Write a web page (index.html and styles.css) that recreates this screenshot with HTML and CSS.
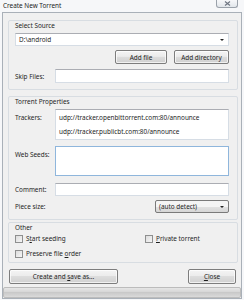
FILE: index.html
```html
<!DOCTYPE html>
<html>
  <head>
    <title>Create New Torrent</title>
    <link rel="stylesheet" href="styles.css">
  </head>
  <body>
    <div class="window">
      <div class="titlebar">
        <span class="title">Create New Torrent</span>
        <span class="close-btn">
          <svg width="7" height="5" viewBox="0 0 7 5"><path d="M1 0.5L6 4.5M6 0.5L1 4.5" stroke="#6d7480" stroke-width="1.1" fill="none"/></svg>
        </span>
      </div>

      <div class="client">
        <!-- Select Source -->
        <div class="group group-source">
          <div class="group-title">Select Source</div>
          <div class="combo combo-edit">
            <span>D:\android</span>
            <span class="arrow"></span>
          </div>
          <div class="btn-row">
            <button class="btn btn-file">Add file</button>
            <button class="btn btn-dir">Add directory</button>
          </div>
          <div class="field-row skip-row">
            <span class="label">Skip Files:</span>
            <div class="input"></div>
          </div>
        </div>

        <!-- Torrent Properties -->
        <div class="group group-props">
          <div class="group-title">Torrent Properties</div>
          <div class="field-row trackers-row">
            <span class="label">Trackers:</span>
            <div class="input textarea">udp://tracker.openbittorrent.com:80/announce

udp://tracker.publicbt.com:80/announce</div>
          </div>
          <div class="field-row seeds-row">
            <span class="label">Web Seeds:</span>
            <div class="input textarea focus"></div>
          </div>
          <div class="field-row comment-row">
            <span class="label">Comment:</span>
            <div class="input"></div>
          </div>
          <div class="field-row piece-row">
            <span class="label">Piece size:</span>
            <div class="combo combo-drop">
              <span>(auto detect)</span>
              <span class="arrow"></span>
            </div>
          </div>
        </div>

        <!-- Other -->
        <div class="group group-other">
          <div class="group-title">Other</div>
          <div class="check-row">
            <label class="check check-wide"><span class="box"></span><span>S<u>t</u>art seeding</span></label>
            <label class="check"><span class="box"></span><span><u>P</u>rivate torrent</span></label>
          </div>
          <div class="check-row">
            <label class="check"><span class="box"></span><span>Preserve file <u>o</u>rder</span></label>
          </div>
        </div>

        <div class="action-row">
          <button class="btn btn-create">Create and <u>s</u>ave as...</button>
          <button class="btn btn-close"><u>C</u>lose</button>
        </div>

        <div class="progress"></div>
      </div>
    </div>
  </body>
</html>
```

FILE: styles.css
```css
body {
  margin: 0;
  background: #f6f7f9;
  font-family: "Noto Sans", "Open Sans", sans-serif;
  font-size: 6.4px;
  color: #1e1e1e;
}

.window {
  width: 244px;
  height: 300px;
  display: flex;
  flex-direction: column;
}

.titlebar {
  height: 13px;
  display: flex;
  align-items: flex-start;
  justify-content: space-between;
  padding-left: 3px;
}

.title {
  line-height: 12px;
  color: #222;
}

.close-btn {
  width: 20px;
  height: 7px;
  margin-right: 6px;
  border: 1px solid #9aa1aa;
  border-top: none;
  border-radius: 0 0 3px 3px;
  background: linear-gradient(#f7f8fa, #e2e6eb);
  display: flex;
  align-items: center;
  justify-content: center;
}

.client {
  flex: 1;
  margin: 0 2px 1px 2px;
  border: 1px solid #a9b0b8;
  background: #f0f0f0;
  padding-top: 7px;
  display: flex;
  flex-direction: column;
}

/* Group boxes */
.group {
  margin: 0 3px 0 5px;
  border: 1px solid #d8dde2;
  border-radius: 2px;
  padding: 0 8px 0 6px;
  display: flex;
  flex-direction: column;
}

.group-title {
  height: 9px;
  line-height: 9px;
}

.group-source {
  height: 68px;
}

.group-props {
  margin-top: 6px;
  height: 122px;
}

.group-other {
  margin-top: 2px;
  height: 39px;
}

/* Inputs and combos */
.input {
  flex: 1;
  background: #fff;
  border: 1px solid #d6dde5;
  border-top-color: #abadb3;
  box-sizing: border-box;
}

.input.focus {
  border-color: #8fb6dc;
}

.textarea {
  white-space: pre;
  line-height: 7px;
  padding: 4px 0 0 3px;
}

.combo {
  display: flex;
  align-items: center;
  justify-content: space-between;
  box-sizing: border-box;
  height: 13px;
  padding: 0 4px 0 3px;
}

.combo-edit {
  margin-top: 3px;
  background: #fff;
  border: 1px solid #d6dde5;
  border-top-color: #abadb3;
}

.combo-drop {
  width: 74px;
  margin-left: auto;
  border: 1px solid #7a7a7a;
  border-radius: 2px;
  background: linear-gradient(#f4f4f4 50%, #e2e2e2 50%, #d6d6d6);
}

.arrow {
  width: 0;
  height: 0;
  border-left: 2px solid transparent;
  border-right: 2px solid transparent;
  border-top: 2px solid #222;
}

/* Buttons */
.btn {
  font-family: inherit;
  font-size: inherit;
  color: #1e1e1e;
  height: 14px;
  padding: 0;
  border: 1px solid #7d7d7d;
  border-radius: 2px;
  background: linear-gradient(#f4f4f4 0%, #ececec 45%, #dddddd 50%, #d0d0d0 100%);
  box-shadow: inset 0 0 0 1px rgba(255, 255, 255, 0.7);
}

.btn-row {
  display: flex;
  justify-content: flex-end;
  gap: 7px;
  margin-top: 4px;
}

.btn-file {
  width: 52px;
}

.btn-dir {
  width: 55px;
}

/* Label + control rows */
.field-row {
  display: flex;
}

.label {
  width: 40px;
  flex-shrink: 0;
}

.skip-row {
  margin-top: 5px;
  height: 14px;
  align-items: center;
}

.skip-row .input {
  height: 14px;
}

.trackers-row {
  margin-top: 3px;
  height: 31px;
}

.trackers-row .label,
.seeds-row .label {
  padding-top: 4px;
}

.seeds-row {
  margin-top: 6px;
  height: 30px;
}

.comment-row {
  margin-top: 7px;
  height: 13px;
  align-items: center;
}

.comment-row .input {
  height: 13px;
}

.piece-row {
  margin-top: 4px;
  align-items: center;
}

/* Checkboxes */
.check-row {
  display: flex;
  height: 9px;
  align-items: center;
  margin-top: 2px;
}

.check-row + .check-row {
  margin-top: 6px;
}

.check {
  display: flex;
  align-items: center;
  gap: 3px;
}

.check-wide {
  width: 130px;
}

.box {
  width: 6px;
  height: 6px;
  border: 1px solid #8e8f8f;
  background: linear-gradient(135deg, #dcdcdc, #f6f6f6);
}

u {
  text-decoration-thickness: 0.5px;
  text-underline-offset: 1px;
}

/* Bottom */
.action-row {
  display: flex;
  justify-content: space-between;
  margin: 6px 5px 0 6px;
}

.btn-create {
  width: 109px;
  height: 15px;
}

.btn-close {
  width: 48px;
  height: 15px;
}

.progress {
  margin-top: 3px;
  height: 11px;
  box-sizing: border-box;
  border: 1px solid #bcbcbc;
  border-radius: 2px;
  background: linear-gradient(#e6e6e6, #d4d4d4 50%, #c9c9c9 50%, #dadada);
}
```
